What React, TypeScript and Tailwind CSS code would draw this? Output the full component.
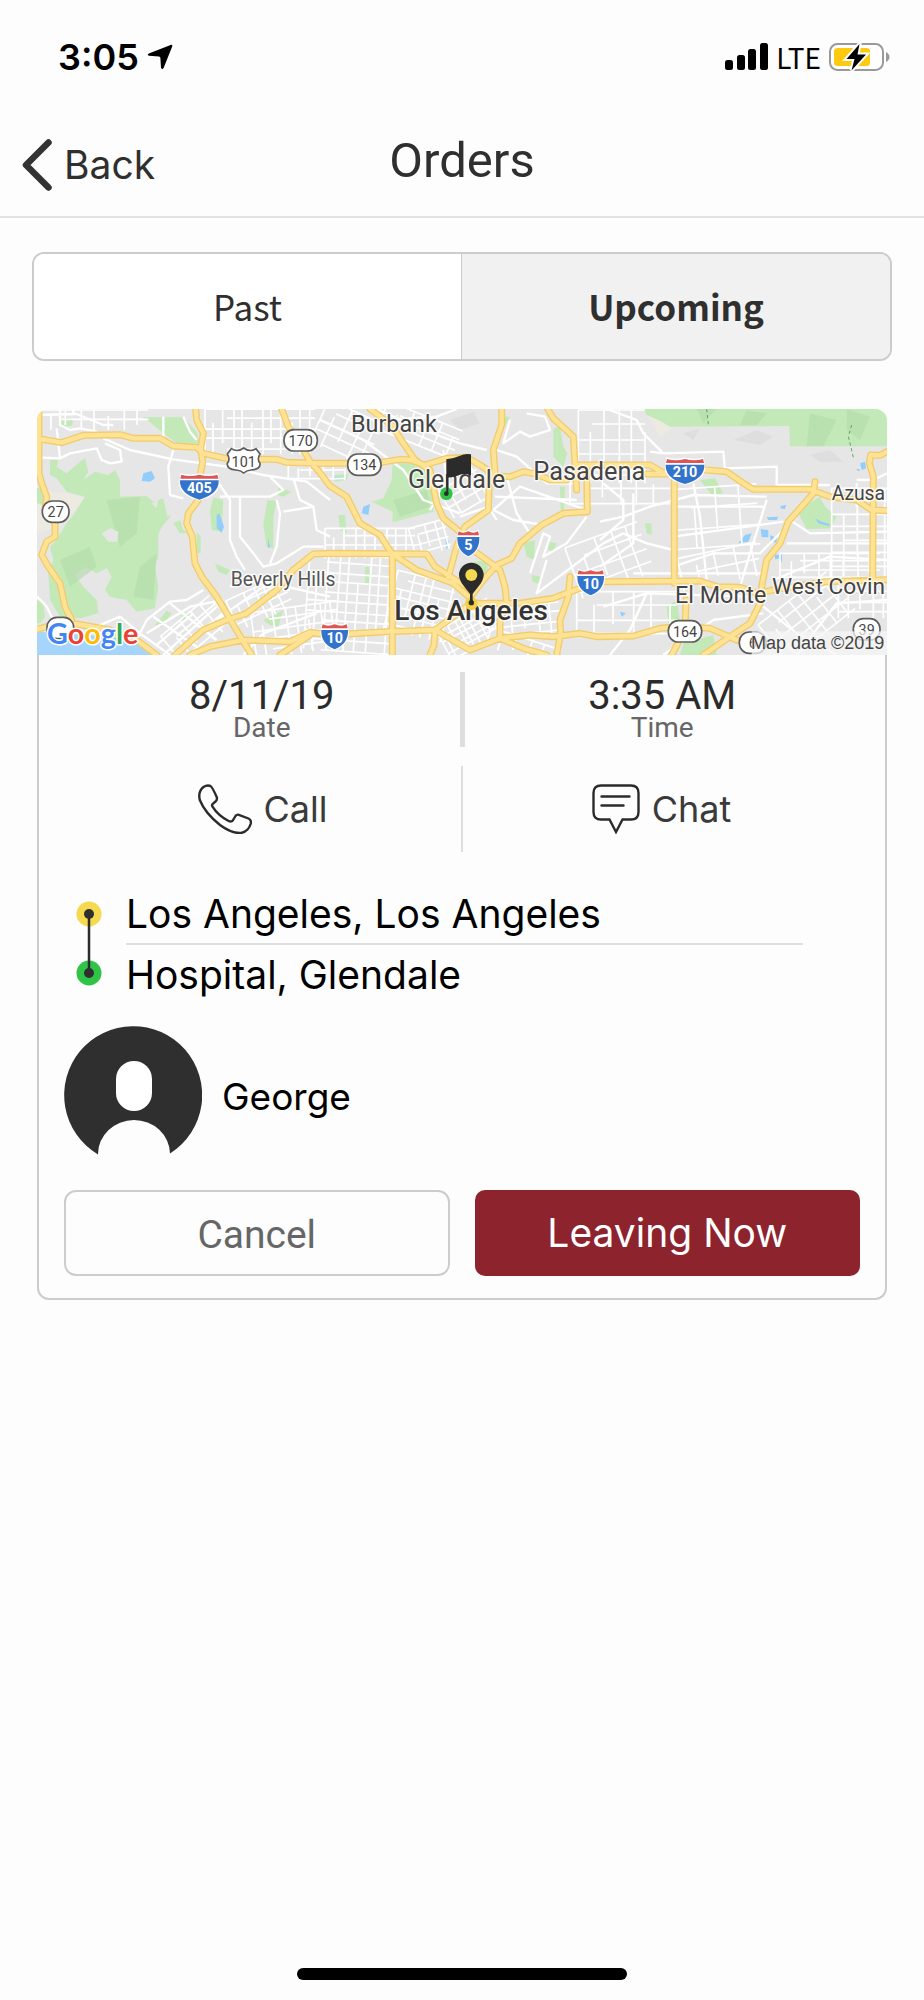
import { useState } from "react";

type Pt = [number, number];

const FREEWAYS = [
  // 405
  "M497 27L500 60L520 100L512 145L518 185L508 240L505 300L475 340L470 370L487 410L495 490L515 530L560 590L590 640L625 700L665 765",
  // 101 / 134 / 210
  "M21 115L95 128L160 106L270 104L310 115L390 115L430 138L500 142L520 160L600 178L740 178L770 187L870 190L960 190L1050 188L1110 178L1140 180L1185 195L1250 175L1310 172L1350 195L1400 228L1440 230L1480 215L1520 222L1560 240L1610 240",
  "M1640 195L1730 195L1860 195L1900 218L1960 208L2030 210L2090 215L2140 250L2170 268L2340 268L2400 290L2480 300L2525 330L2571 332",
  "M1850 222L1960 222",
  "M1553 27L1570 55L1630 110L1635 190L1640 270",
  "M1670 195L1672 335L1600 340L1535 375L1470 430L1445 475L1400 495L1360 540L1322 590",
  // 170 into 101 south
  "M755 27L775 80L810 130L840 185L870 218L900 258L950 290L990 370L1050 405L1085 460L1160 510L1270 550L1322 595",
  // 5
  "M1020 27L1085 75L1120 130L1155 180L1200 210L1220 310L1240 355L1295 400L1315 440L1370 480L1410 510L1425 560L1430 610L1410 660L1410 715",
  // 2
  "M1415 27L1415 75L1390 150L1395 215L1378 240L1375 330L1305 380L1280 440L1255 530",
  // Santa Monica
  "M435 765L520 690L590 660L650 640L740 570L790 510L850 462L900 460L1190 462L1215 500L1270 535L1310 560",
  "M1087 462L1087 765",
  // 10
  "M480 765L540 740L640 720L780 725L840 697L900 705L1070 695L1215 690L1270 650L1322 610L1470 610L1570 595L1650 565L1720 545L2010 543L2060 560L2130 562L2180 580L2240 568L2390 545L2571 539",
  "M750 765L840 705",
  "M1215 690L1320 750L1410 715L1500 705L1570 710L1650 700L1700 710L1810 708L1890 685L1950 680L2040 685L2120 720L2160 730",
  "M1215 690L1212 735L1200 765",
  "M1410 715L1480 745L1550 765",
  "M1620 530L1615 590L1590 660L1592 700L1580 765",
  // 605
  "M2355 245L2350 280L2275 365L2250 430L2210 480L2195 560L2190 610L2160 670L2100 710L2020 765",
  "M1933 235L1933 550",
  "M1968 600L1965 690L1925 765",
  "M2571 155L2550 166L2522 165L2518 190L2530 230L2528 540",
  // 27 and the coast
  "M27 27L27 220L35 250L50 290L45 330L75 370L75 410L50 425L35 465L55 500L90 550L105 620L125 660",
  "M21 688L50 680L140 672L240 690L320 720L380 765",
];

const PARKS = [
  "M340 52H460L500 95L508 130L440 130L400 100L370 75Z",
  "M60 180L85 180L80 200L110 220L150 185L165 175L175 215L160 240L195 215L235 225L255 210L270 240L270 290L350 288L370 305L400 295L412 350L425 345L400 375L385 400L385 470L375 500L385 560L375 625L320 635L290 600L240 590L225 570L245 530L230 505L200 520L165 500L135 525L160 560L200 600L205 640L150 655L90 650L60 600L55 520L70 480L60 440L80 420L110 370L130 345L165 290L110 275L80 235L60 225Z",
  "M21 265L45 265L40 315L21 310ZM21 600L40 605L45 650L30 670L21 670Z",
  "M85 60L110 52L130 62L125 78L95 80Z",
  "M550 292L580 300L575 395L545 390L540 330ZM430 370L450 360L460 390L475 400L450 400ZM500 395L512 410L512 460L502 460Z",
  "M712 300L740 302L730 350L730 445L710 440L700 375ZM745 262L785 275L760 290L742 285Z",
  "M375 675L410 632L425 640L395 680ZM455 640L490 645L460 665ZM700 660L760 630L745 680L720 675ZM555 490L600 510L590 525L565 515Z",
  "M1088 185L1180 195L1210 250L1210 335L1088 367L1088 335L1026 305L1060 295L1085 240ZM910 225L955 222L950 240L915 245Z",
  "M925 345L945 345L950 400L930 390ZM1005 500H1018V550H1005Z",
  "M1570 85L1590 80L1600 140L1612 160L1600 200L1570 170ZM1590 260L1605 260L1602 330L1592 330ZM1425 50L1440 50L1425 80Z",
  "M1480 430L1515 420L1512 480L1490 470ZM1555 425L1580 430L1570 455L1555 450ZM1505 525L1535 530L1525 552L1507 545ZM1310 490L1370 480L1375 520L1350 540L1320 530Z",
  "M1840 27L2571 27L2571 139L2280 139L2278 78L1920 80L1890 62L1850 45Z",
  "M2300 330L2370 290L2385 320L2420 350L2400 385L2330 388ZM2010 240L2055 235L2080 280L2045 285Z",
  "M1845 370H1865V405L1850 400ZM1910 620L1940 600L1955 690L1915 670ZM1960 730L2050 705L2060 765L1950 765Z",
];

const WATER = [
  "M340 220L365 213L375 235L360 245L335 243Z",
  "M560 345L568 340L582 380L575 398L560 385ZM714 415L720 440L714 445Z",
  "M1000 320L1020 312L1015 345L995 340ZM1246 415L1258 425L1250 450ZM910 230L950 235L948 240L910 238Z",
  "M2125 430L2145 405L2165 400L2155 425ZM2192 388L2215 390L2215 412L2195 412ZM2220 405L2242 415L2238 428L2222 422ZM2210 352L2245 350L2240 360L2215 360ZM2252 318L2268 315L2265 328L2252 325ZM2235 465L2256 462L2256 490L2250 475L2235 478Z",
  "M2490 190L2505 185L2508 205L2495 210ZM2475 208L2490 208L2488 214ZM1770 635L1788 640L1775 650ZM2355 355L2375 365L2400 372L2395 378L2365 370Z",
];

const STREETS = [
  "M21 172L90 175L120 160L200 145L215 180L240 190L275 185L270 150L225 130M220 115L300 150L430 178L590 200L700 225L830 245L900 300",
  "M90 27V75L120 90L150 85L200 95M21 45L140 42L220 75L250 75M130 40V27M80 85L90 175M400 50V112M460 50L480 95L500 120",
  "M430 150L415 200L420 285L460 295M560 240L600 300L600 420L620 470L645 510M630 290L630 410L670 460L700 500L740 490L820 440L880 440",
  "M570 290L720 290L760 270L720 230M740 300L750 340L740 440L720 490M790 235L810 300L850 320L860 390L900 410M760 335L850 320",
  "M320 720L350 660L420 605L470 600L520 570M350 700L480 620L580 600M380 735L490 640M400 765L560 620M330 700L420 765M370 650L500 740M420 610L560 720",
  "M200 680L270 650L330 700M21 590L50 620L70 660",
  "M600 560L680 540L900 590M560 660L700 560L780 570M640 765L700 700L860 640",
  "M870 60L1000 120L1120 210L1180 300L1290 340M1040 27L1180 90L1290 130L1370 150M1240 150L1250 250L1200 330M1280 27L1220 50L1060 60",
  "M1390 330L1450 360L1540 375M1390 330L1470 260L1670 330M1395 290L1640 300M1430 230L1460 340L1500 400M1290 350L1375 320L1400 360",
  "M1440 60L1420 130L1470 95L1500 110L1560 90L1545 50L1490 40M1400 150L1460 170L1550 250L1640 250",
  "M1500 520L1540 400L1560 410L1540 470L1610 430L1670 350M1550 480L1520 580L1600 520L1720 430L1780 400L1850 430L1930 450",
  "M1710 365L1780 350L1860 320L1990 285L2210 290M1710 420L1780 360L1780 300L1720 250M1710 500L1810 430L1810 280M1930 500L2050 460L2190 460L2300 350",
  "M1730 27L1820 60L1840 100L1900 160L2080 155L2085 210M1900 160L1860 155M2080 205L2240 200V255L2400 255",
  "M2130 560L2160 460L2210 300M1930 320H2200M1930 410L2260 365M1990 250L2010 350L2030 540M1810 520H2200M2230 540L2400 470L2571 480",
  "M1720 620L1850 580L2150 590M1740 765L1800 690L1850 580M1900 765L2050 660L2200 640M2200 620L2300 700L2420 765M2300 765L2420 610L2571 600",
  "M2480 240L2530 240L2571 220M2280 360L2340 400L2571 395M2270 430H2571M2480 250V320",
];

interface GridProps {
  center: Pt;
  size: Pt;
  step: Pt;
  angle?: number;
  weight?: number;
}

function StreetGrid({ center: [cx, cy], size: [w, h], step: [sx, sy], angle = 0, weight = 5 }: GridProps) {
  let d = "";
  for (let x = -w / 2, i = 0; x <= w / 2; x += sx + (i % 3) * 5, i++) {
    const cut = i % 4 === 1 ? h * 0.3 : 0;
    d += `M${x} ${-h / 2 + cut}V${h / 2 - (i % 5 === 2 ? h * 0.25 : 0)}`;
  }
  for (let y = -h / 2, i = 0; y <= h / 2; y += sy + (i % 2) * 6, i++) {
    d += `M${-w / 2 + (i % 3 === 1 ? w * 0.2 : 0)} ${y}H${w / 2}`;
  }
  return <path d={d} strokeWidth={weight} transform={`translate(${cx} ${cy}) rotate(${angle})`} />;
}

function Interstate({ at: [x, y], n }: { at: Pt; n: string }) {
  const w = n.length > 2 ? 58 : n.length > 1 ? 40 : 33;
  return (
    <g transform={`translate(${x} ${y})`}>
      <path
        d={`M${-w + 4} -38Q${-w / 2} -30 0 -38Q${w / 2} -30 ${w - 4} -38L${w} -10Q${w} 24 0 39Q${-w} 24 ${-w} -10Z`}
        fill="#fff"
        stroke="#fff"
        strokeWidth="5"
      />
      <path d={`M${-w + 4} -36Q${-w / 2} -28 0 -36Q${w / 2} -28 ${w - 4} -36L${w - 1} -24H${-w + 1}Z`} fill="#dc5656" />
      <path d={`M${-w} -19H${w}Q${w + 2} 22 0 39Q${-w - 2} 22 ${-w} -19Z`} fill="#3273cb" />
      <text y="19" textAnchor="middle" fill="#fff" fontSize="43" fontWeight="700">{n}</text>
    </g>
  );
}

function StateRoute({ at: [x, y], n }: { at: Pt; n?: string }) {
  const w = n && n.length > 2 ? 50 : 40;
  return (
    <g transform={`translate(${x} ${y})`}>
      <rect x={-w} y="-32" width={w * 2} height="64" rx="30" fill="#fff" stroke="#5d5d5d" strokeWidth="5" />
      {n && <text y="16" textAnchor="middle" fill="#444" fontSize="43">{n}</text>}
    </g>
  );
}

const PLACES: { name: string; x: number; y: number; size: number; fill: string; weight?: number }[] = [
  { name: "Burbank", x: 963, y: 97, size: 70, fill: "#444" },
  { name: "Glendale", x: 1134, y: 263, size: 75, fill: "#444" },
  { name: "Pasadena", x: 1510, y: 241, size: 76, fill: "#444" },
  { name: "Beverly Hills", x: 602, y: 557, size: 58, fill: "#555" },
  { name: "Los Angeles", x: 1093, y: 659, size: 84, fill: "#333", weight: 500 },
  { name: "El Monte", x: 1935, y: 609, size: 70, fill: "#444" },
  { name: "Azusa", x: 2405, y: 299, size: 58, fill: "#444" },
  { name: "West Covin", x: 2226, y: 583, size: 68, fill: "#444" },
];

function RouteMap() {
  return (
    <svg
      viewBox="21 27 2550 738"
      role="img"
      aria-label="Map from Los Angeles to Glendale"
      className="block w-full rounded-t-[12px] font-['Roboto',sans-serif]"
    >
      <rect x="21" y="27" width="2550" height="738" fill="#e6e6e6" />
      <path d="M21 270L110 280L165 295L110 360L90 380L21 400ZM1850 40L1930 82L1890 110Z" fill="#edeae2" />
      <path d={PARKS.join("")} fill="#c4e9b8" />
      <path d="M230 300L330 290L320 400L270 440ZM90 480L180 440L200 500L120 560ZM330 500L380 460L370 600L310 590ZM2340 40L2420 60L2380 139H2330ZM2450 27L2520 50L2490 120L2450 90ZM2000 27H2060L2020 70ZM2150 30L2210 40L2180 76H2130ZM1090 300L1190 270L1200 320L1110 350Z" fill="#b3dba9" opacity=".6" />
      <path d="M215 400L240 385L265 395L262 425L235 425ZM365 310L385 300L380 325Z" fill="#e6e6e6" />
      <path d="M2030 27L2035 75M2465 75L2455 110L2465 150L2470 172" fill="none" stroke="#5fa46c" strokeWidth="3" strokeDasharray="10 8" />
      <path d="M1960 100L2010 85L1990 120ZM2110 120L2180 90L2230 110L2190 135ZM2340 165L2400 150L2440 185L2370 185ZM1260 60L1330 35L1350 70L1290 90Z" fill="#dedede" />
      <path d={WATER.join("")} fill="#93cdfb" />
      <path d="M21 692L60 700L230 708L320 722L345 745L370 765H21Z" fill="#a5d5fb" />

      <g fill="none" stroke="#fff">
        <StreetGrid center={[190, 60]} size={[330, 60]} step={[38, 28]} />
        <StreetGrid center={[690, 95]} size={[330, 135]} step={[24, 27]} />
        <StreetGrid center={[860, 215]} size={[170, 50]} step={[30, 20]} />
        <StreetGrid center={[950, 100]} size={[180, 140]} step={[36, 30]} angle={25} />
        <StreetGrid center={[1170, 90]} size={[240, 90]} step={[40, 28]} angle={22} />
        <StreetGrid center={[1300, 270]} size={[130, 120]} step={[26, 26]} angle={-30} />
        <StreetGrid center={[500, 690]} size={[190, 110]} step={[34, 30]} angle={-40} />
        <StreetGrid center={[690, 610]} size={[180, 100]} step={[26, 24]} angle={-25} />
        <StreetGrid center={[800, 690]} size={[260, 140]} step={[30, 26]} angle={-8} />
        <StreetGrid center={[960, 610]} size={[260, 290]} step={[26, 26]} angle={4} />
        <StreetGrid center={[1020, 430]} size={[270, 90]} step={[26, 22]} />
        <StreetGrid center={[1170, 620]} size={[180, 180]} step={[24, 24]} angle={14} />
        <StreetGrid center={[1320, 690]} size={[180, 120]} step={[16, 16]} angle={-28} />
        <StreetGrid center={[1200, 415]} size={[110, 90]} step={[22, 24]} angle={-15} />
        <StreetGrid center={[1500, 660]} size={[180, 90]} step={[34, 26]} angle={-6} />
        <StreetGrid center={[1480, 745]} size={[220, 60]} step={[38, 30]} angle={18} />
        <StreetGrid center={[1745, 140]} size={[200, 220]} step={[36, 42]} />
        <StreetGrid center={[1770, 270]} size={[300, 90]} step={[46, 40]} />
        <StreetGrid center={[1740, 480]} size={[230, 160]} step={[44, 40]} angle={-20} />
        <StreetGrid center={[1790, 640]} size={[300, 130]} step={[52, 40]} />
        <StreetGrid center={[2060, 350]} size={[250, 180]} step={[60, 58]} angle={-4} />
        <StreetGrid center={[2070, 500]} size={[240, 100]} step={[52, 50]} angle={-12} />
        <StreetGrid center={[2490, 400]} size={[170, 270]} step={[36, 36]} />
        <StreetGrid center={[2400, 500]} size={[300, 80]} step={[34, 22]} />
        <StreetGrid center={[2330, 650]} size={[260, 140]} step={[34, 32]} angle={-38} />
        <StreetGrid center={[2500, 600]} size={[150, 110]} step={[30, 28]} />
        <path d={STREETS.join("")} strokeWidth="7" strokeLinejoin="round" />
      </g>

      <g fill="none" strokeLinejoin="round" strokeLinecap="round">
        <path d={FREEWAYS.join("")} stroke="#f1cb6c" strokeWidth="21" />
        <path d={FREEWAYS.join("")} stroke="#ffe395" strokeWidth="13" />
      </g>

      <StateRoute at={[77, 335]} n="27" />
      <StateRoute at={[812, 121]} n="170" />
      <StateRoute at={[1003, 194]} n="134" />
      <StateRoute at={[1965, 694]} n="164" />
      <StateRoute at={[2168, 728]} n="6" />
      <StateRoute at={[2510, 688]} n="39" />
      <StateRoute at={[91, 684]} />
      <g>
        <path
          d="M604 146Q622 158 641 144Q660 158 678 146L690 162Q680 178 690 190Q692 208 664 210Q650 211 641 219Q632 211 618 210Q590 208 592 190Q602 178 592 162Z"
          fill="#fff"
          stroke="#5d5d5d"
          strokeWidth="5"
        />
        <text x="641" y="201" textAnchor="middle" fontSize="43" fill="#444">101</text>
      </g>
      <Interstate at={[508, 260]} n="405" />
      <Interstate at={[1965, 213]} n="210" />
      <Interstate at={[1315, 430]} n="5" />
      <Interstate at={[1682, 547]} n="10" />
      <Interstate at={[914, 709]} n="10" />

      {PLACES.map((p) => (
        <text
          key={p.name}
          x={p.x}
          y={p.y}
          fontSize={p.size}
          fontWeight={p.weight ?? 400}
          fill={p.fill}
          stroke="#fff"
          strokeOpacity=".75"
          strokeWidth="9"
          strokeLinejoin="round"
          paintOrder="stroke"
        >
          {p.name}
        </text>
      ))}

      {/* drop-off flag */}
      <circle cx="1249" cy="281" r="19" fill="#2fc447" />
      <path d="M1249 178Q1270 176 1288 168Q1305 160 1323 163V226Q1302 218 1286 226Q1270 234 1255 232V281H1249Z" fill="#2b2b2b" />
      <circle cx="1249" cy="281" r="7" fill="#2b2b2b" />

      {/* pickup pin */}
      <circle cx="1324" cy="611" r="19" fill="#f3cf45" />
      <path d="M1324 488A37 37 0 0 1 1361 525C1361 548 1336 568 1328 582V608H1320V582C1312 568 1287 548 1287 525A37 37 0 0 1 1324 488Z" fill="#2b2b2b" />
      <circle cx="1324" cy="525" r="18" fill="#f5d94e" />
      <circle cx="1324" cy="608" r="8" fill="#2b2b2b" />

      <rect x="2165" y="694" width="406" height="71" fill="#f5f5f5" opacity=".75" />
      <text x="2563" y="748" textAnchor="end" fontSize="54" fill="#444" className="font-['Liberation_Sans',Arial,sans-serif]">
        Map data ©2019
      </text>
      <text
        x="51"
        y="731"
        fontSize="86"
        fontWeight="700"
        stroke="#fff"
        strokeWidth="9"
        strokeLinejoin="round"
        paintOrder="stroke"
        className="font-['Lato',sans-serif]"
      >
        <tspan fill="#4285f4">G</tspan>
        <tspan fill="#ea4335">o</tspan>
        <tspan fill="#fbbc05">o</tspan>
        <tspan fill="#4285f4">g</tspan>
        <tspan fill="#34a853">l</tspan>
        <tspan fill="#ea4335">e</tspan>
      </text>
    </svg>
  );
}

function StatusBar() {
  return (
    <div className="flex h-[114px] items-center justify-between pr-[34px] pl-[58px] text-black">
      <div className="flex items-center gap-2">
        <span className="text-[36px] leading-none font-semibold">3:05</span>
        <svg viewBox="0 0 26 26" className="size-[26px]" fill="#000">
          <path d="M23.6 .9Q25.800 .4 25.200 2.600L16.600 24Q15.200 26.200 14 23.800L13.400 14Q13.200 12.800 12 12.600L2 11.800Q-.4 11 1.800 9.600Z" />
        </svg>
      </div>
      <div className="flex items-center">
        <svg viewBox="0 0 44 28" className="h-7 w-11" fill="#000">
          <rect x="1" y="17" width="8" height="10" rx="2.5" />
          <rect x="13" y="12" width="8" height="15" rx="2.5" />
          <rect x="24" y="6" width="8" height="21" rx="2.5" />
          <rect x="36" y="0" width="8" height="27" rx="2.5" />
        </svg>
        <span className="ml-2 font-['Noto_Sans_CJK_JP',sans-serif] text-[28px] leading-none">LTE</span>
        <svg viewBox="0 0 61 30" className="ml-2 h-[30px] w-[61px]">
          <rect x="1" y="2" width="53" height="26" rx="7.5" fill="#fff" stroke="#999" strokeWidth="2" />
          <path d="M57 10Q60.500 12 60.500 15Q60.500 18 57 20Z" fill="#999" />
          <rect x="5" y="6" width="36" height="18" rx="3.500" fill="#fdca0f" />
          <path d="M30.500 2L17.500 17H25.500L22.500 28.500L37 12.500H28.500Z" fill="#000" stroke="#fff" strokeWidth="4" paintOrder="stroke" />
        </svg>
      </div>
    </div>
  );
}

function PhoneIcon() {
  return (
    <svg viewBox="0 0 54 50" className="h-[50px] w-[54px]" fill="none" stroke="#2b2b2b" strokeWidth="2.4" strokeLinejoin="round">
      <path d="M5.500 3Q9 .8 12.500 2Q14 2.600 18.700 13Q19.600 15.500 17.500 17.500L14.800 19.800Q13.500 21 14.500 22.600Q20 31.500 31 37.200Q33.500 38 34.800 36.500L37.500 32Q38.800 30.200 40.800 30.800L50.500 34.500Q53.600 36 52.800 39.500Q50.500 47.500 43 49Q34 49.800 22 41Q7 29 1.800 16Q-.2 7.500 5.500 3Z" />
    </svg>
  );
}

function ChatIcon() {
  return (
    <svg viewBox="0 0 48 50" className="h-[50px] w-12" fill="none" stroke="#2b2b2b" strokeWidth="2.4" strokeLinecap="round">
      <path d="M9 1.500H39Q46.500 1.500 46.500 9V28Q46.500 35.500 39 35.500H30.500L24 48L17.500 35.500H9Q1.500 35.500 1.500 28V9Q1.500 1.500 9 1.500Z" />
      <path d="M9.500 12.500H37.500M9.500 21.500H31.500" />
    </svg>
  );
}

function Avatar() {
  return (
    <svg viewBox="0 0 138 130" className="h-[130px] w-[138px] shrink-0" aria-hidden="true">
      <path d="M34 128.500A69 69 0 1 1 106 127.500A36 34 0 0 0 70 94A36 34 0 0 0 34 128.500Z" fill="#2f2f2f" />
      <rect x="52" y="35" width="36" height="50" rx="18" fill="#fff" />
    </svg>
  );
}

function Detail({ value, label }: { value: string; label: string }) {
  return (
    <div className="flex-1 text-center font-['Roboto',sans-serif]">
      <p className="text-[40px] leading-[48px] text-[#2b2b2b]">{value}</p>
      <p className="text-[28px] leading-[16px] text-[#666]">{label}</p>
    </div>
  );
}

const TABS = ["Past", "Upcoming"];

export default function App() {
  const [tab, setTab] = useState("Upcoming");

  return (
    <div className="flex min-h-screen flex-col bg-[#fdfdfd] font-['Inter',sans-serif]">
      <StatusBar />

      <header className="grid h-[104px] grid-cols-[1fr_auto_1fr] items-center border-b-2 border-[#e2e2e2] px-[22px]">
        <button className="flex items-center gap-3 text-[39px] leading-[52px] text-[#2f2f2f]">
          <svg viewBox="0 0 30 52" className="h-[52px] w-[30px]" fill="none" stroke="#333" strokeWidth="6.5" strokeLinecap="round" strokeLinejoin="round">
            <path d="M26.500 3.500L4 26L26.500 48.500" />
          </svg>
          Back
        </button>
        <h1 className="pb-2 font-['Roboto',sans-serif] text-[49px] leading-[56px] text-[#2f2f2f]">Orders</h1>
      </header>

      <main className="px-8 pt-[34px]">
        <div role="tablist" className="grid h-[109px] grid-cols-2 overflow-hidden rounded-[12px] border-2 border-[#ccc]">
          {TABS.map((name) => (
            <button
              key={name}
              role="tab"
              aria-selected={tab === name}
              onClick={() => setTab(name)}
              className={`font-['Noto_Sans_CJK_JP',sans-serif] text-[35px] text-[#2f2f2f] first:border-r first:border-[#ccc] ${
                tab === name ? "bg-[#f1f1f1] font-bold" : "bg-white font-normal"
              }`}
            >
              {name}
            </button>
          ))}
        </div>

        <article className="mx-[5px] mt-12">
          <RouteMap />
          <div className="rounded-b-[12px] border-x-2 border-b-2 border-[#ccc] px-[25px] pb-[22px]">
            <div className="flex items-stretch pt-[17px]">
              <Detail value="8/11/19" label="Date" />
              <div className="h-[75px] w-[5px] bg-[#dedede]" />
              <Detail value="3:35 AM" label="Time" />
            </div>

            <div className="mt-[19px] flex h-[86px] items-stretch text-[36px] text-[#3a3a3a]">
              <button className="flex flex-1 items-center justify-center gap-3">
                <PhoneIcon />
                Call
              </button>
              <div className="w-[2px] bg-[#dedede]" />
              <button className="flex flex-1 items-center justify-center gap-3">
                <ChatIcon />
                Chat
              </button>
            </div>

            <div className="mt-[32px] flex gap-[24px] pr-[57px] pl-[12px]">
              <svg viewBox="0 0 26 118" className="h-[118px] w-[26px] shrink-0" aria-hidden="true">
                <circle cx="13" cy="30" r="12.5" fill="#f5d94e" />
                <circle cx="13" cy="89" r="12.5" fill="#2fc447" />
                <path d="M13 30V89" stroke="#2b2b2b" strokeWidth="2.5" />
                <circle cx="13" cy="30" r="5" fill="#2f2f2f" />
                <circle cx="13" cy="89" r="5" fill="#2f2f2f" />
              </svg>
              <ul className="flex-1 text-[39px] leading-[59px] text-black">
                <li className="border-b-2 border-[#e0e0e0]">Los Angeles, Los Angeles</li>
                <li>Hospital, Glendale</li>
              </ul>
            </div>

            <div className="mt-[22px] flex items-center gap-[20px]">
              <Avatar />
              <span className="mt-3 text-[37px] text-black">George</span>
            </div>

            <div className="mt-[34px] grid grid-cols-2 gap-[25px]">
              <button className="h-[86px] rounded-[12px] border-2 border-[#ccc] pt-1 font-['Roboto',sans-serif] text-[39px] text-[#666]">
                Cancel
              </button>
              <button className="h-[86px] rounded-[10px] bg-[#8d232d] text-[39px] text-white">Leaving Now</button>
            </div>
          </div>
        </article>
      </main>

      <div className="mx-auto mt-auto mb-5 h-3 w-[330px] rounded-full bg-black" />
    </div>
  );
}
